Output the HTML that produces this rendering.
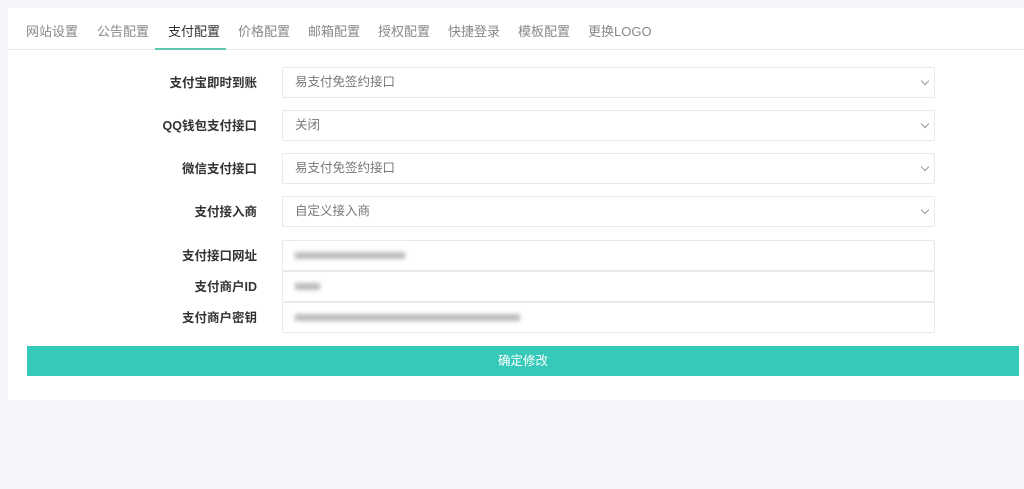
<!DOCTYPE html>
<html><head><meta charset="utf-8"><style>
*{box-sizing:border-box;margin:0;padding:0}
body{width:1024px;height:489px;background:#f4f5f9;font-family:"Liberation Sans","Noto Sans CJK SC",sans-serif;position:relative;overflow:hidden}
.card{position:absolute;left:8px;top:8px;width:1016px;height:392px;background:#fff}
.tabs{height:42px;border-bottom:1px solid #e8eaed;position:relative}
.tab{position:absolute;top:13px;font-size:13px;color:#888}
.tab.on{color:#333}
.ul{position:absolute;left:147px;top:40px;width:71px;height:2px;background:#5fc8b0}
.lab{position:absolute;right:767px;font-size:12.5px;font-weight:bold;color:#333}
.in{position:absolute;left:274px;width:653px;height:31px;border:1px solid #e9e9ec;border-radius:2px;font-size:12.5px;color:#777;padding:0 12px;line-height:29px}
.ch{position:absolute;right:6px;top:10px;width:6px;height:6px;border-right:1px solid #999;border-bottom:1px solid #999;transform:rotate(45deg)}
.blur{display:inline-block;background:#bbb;filter:blur(2px);height:7px;vertical-align:middle}
.btn{position:absolute;left:19px;top:338px;width:992px;height:30px;background:#34c9b8;color:#fff;font-size:12.5px;text-align:center;line-height:30px}
</style></head><body>
<div class="card">
<div class="tabs">
<span class="tab" style="left:18px">网站设置</span>
<span class="tab" style="left:89px">公告配置</span>
<span class="tab on" style="left:160px">支付配置</span>
<span class="tab" style="left:230px">价格配置</span>
<span class="tab" style="left:300px">邮箱配置</span>
<span class="tab" style="left:370px">授权配置</span>
<span class="tab" style="left:440px">快捷登录</span>
<span class="tab" style="left:510px">模板配置</span>
<span class="tab" style="left:580px">更换LOGO</span>
<div class="ul"></div>
</div>
<div class="lab" style="top:64px">支付宝即时到账</div>
<div class="in" style="top:59px">易支付免签约接口<i class="ch"></i></div>
<div class="lab" style="top:107px">QQ钱包支付接口</div>
<div class="in" style="top:102px">关闭<i class="ch"></i></div>
<div class="lab" style="top:150px">微信支付接口</div>
<div class="in" style="top:145px">易支付免签约接口<i class="ch"></i></div>
<div class="lab" style="top:193px">支付接入商</div>
<div class="in" style="top:188px">自定义接入商<i class="ch"></i></div>
<div class="lab" style="top:237px">支付接口网址</div>
<div class="in" style="top:232px"><span class="blur" style="width:110px"></span></div>
<div class="lab" style="top:268px">支付商户ID</div>
<div class="in" style="top:263px"><span class="blur" style="width:25px"></span></div>
<div class="lab" style="top:299px">支付商户密钥</div>
<div class="in" style="top:294px"><span class="blur" style="width:225px"></span></div>
<div class="btn">确定修改</div>
</div>
</body></html>
